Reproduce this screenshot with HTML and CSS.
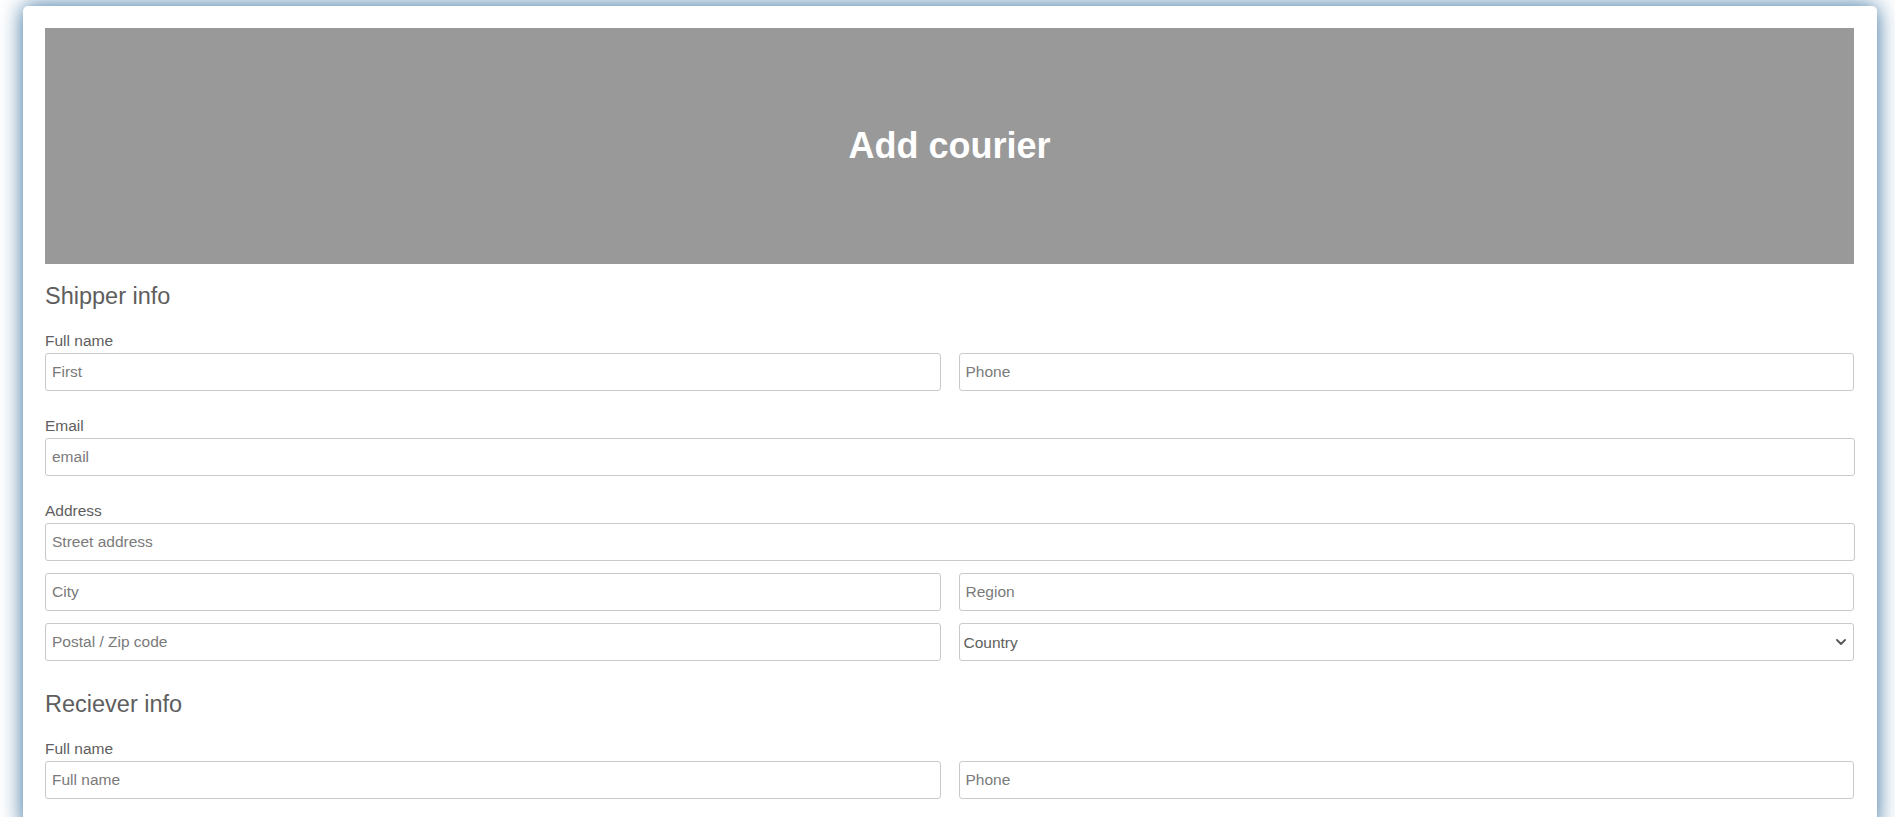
FILE: index.html
```html
<!DOCTYPE html>
<html lang="en">
<head>
<meta charset="utf-8">
<title>Add courier</title>
<link rel="stylesheet" href="styles.css">
</head>
<body>
<div class="card">
  <header class="banner">
    <h1 class="banner-title">Add courier</h1>
  </header>

  <section class="section">
    <h2 class="section-title">Shipper info</h2>
    <div class="group">
      <label class="label">Full name</label>
      <div class="row">
        <input class="field" type="text" placeholder="First">
        <input class="field" type="text" placeholder="Phone">
      </div>
    </div>
    <div class="group">
      <label class="label">Email</label>
      <input class="field field-full" type="email" placeholder="email">
    </div>
    <div class="group">
      <label class="label">Address</label>
      <div class="stack">
        <input class="field field-full" type="text" placeholder="Street address">
        <div class="row">
          <input class="field" type="text" placeholder="City">
          <input class="field" type="text" placeholder="Region">
        </div>
        <div class="row">
          <input class="field" type="text" placeholder="Postal / Zip code">
          <div class="select-wrap">
            <select class="field select">
              <option>Country</option>
            </select>
            <svg class="chevron" width="10" height="6" viewBox="0 0 10 6" aria-hidden="true"><polyline points="1,1 5,5 9,1" fill="none" stroke="#555" stroke-width="1.8" stroke-linecap="round" stroke-linejoin="round"/></svg>
          </div>
        </div>
      </div>
    </div>
  </section>

  <section class="section">
    <h2 class="section-title">Reciever info</h2>
    <div class="group">
      <label class="label">Full name</label>
      <div class="row">
        <input class="field" type="text" placeholder="Full name">
        <input class="field" type="text" placeholder="Phone">
      </div>
    </div>
  </section>
</div>
</body>
</html>
```

FILE: styles.css
```css
* {
  box-sizing: border-box;
}

html, body {
  background: #ffffff;
}

body {
  margin: 0;
  padding: 6px 18px 40px 23px;
  font-family: "Liberation Sans", Arial, sans-serif;
  color: #5e5e5e;
}

.card {
  background: #ffffff;
  border-radius: 5px;
  padding: 22px 23px 30px 22px;
  box-shadow: 0 0 22px rgba(40, 100, 150, 0.95);
}

.banner {
  height: 236px;
  background: #999999;
  display: flex;
  align-items: center;
  justify-content: center;
}

.banner-title {
  margin: 0;
  color: #ffffff;
  font-size: 36px;
  font-weight: bold;
  line-height: 40px;
}

.section {
  margin-top: 18px;
}

.section + .section {
  margin-top: 29px;
}

.section-title {
  margin: 0 0 22px;
  font-size: 23.5px;
  font-weight: normal;
  line-height: 28px;
  color: #5e5e5e;
}

.group + .group {
  margin-top: 26px;
}

.label {
  display: block;
  font-size: 15.5px;
  line-height: 18px;
  margin-bottom: 3px;
  color: #5e5e5e;
}

.row {
  display: grid;
  grid-template-columns: 1fr 1fr;
  column-gap: 18px;
}

.stack {
  display: flex;
  flex-direction: column;
  gap: 12px;
}

.field {
  display: block;
  width: 100%;
  height: 38px;
  margin: 0;
  padding: 0 6px;
  border: 1px solid #c9c9c9;
  border-radius: 3px;
  background: #ffffff;
  font-family: "Liberation Sans", Arial, sans-serif;
  font-size: 15.5px;
  color: #5e5e5e;
  outline: none;
}

.field-full {
  width: calc(100% + 1px);
}

.field::placeholder {
  color: #7a7a7a;
  opacity: 1;
}

.select-wrap {
  position: relative;
}

.select {
  appearance: none;
  -webkit-appearance: none;
  padding: 0 28px 0 4px;
  color: #5e5e5e;
}

.chevron {
  position: absolute;
  right: 8px;
  top: 16px;
  pointer-events: none;
}
```
